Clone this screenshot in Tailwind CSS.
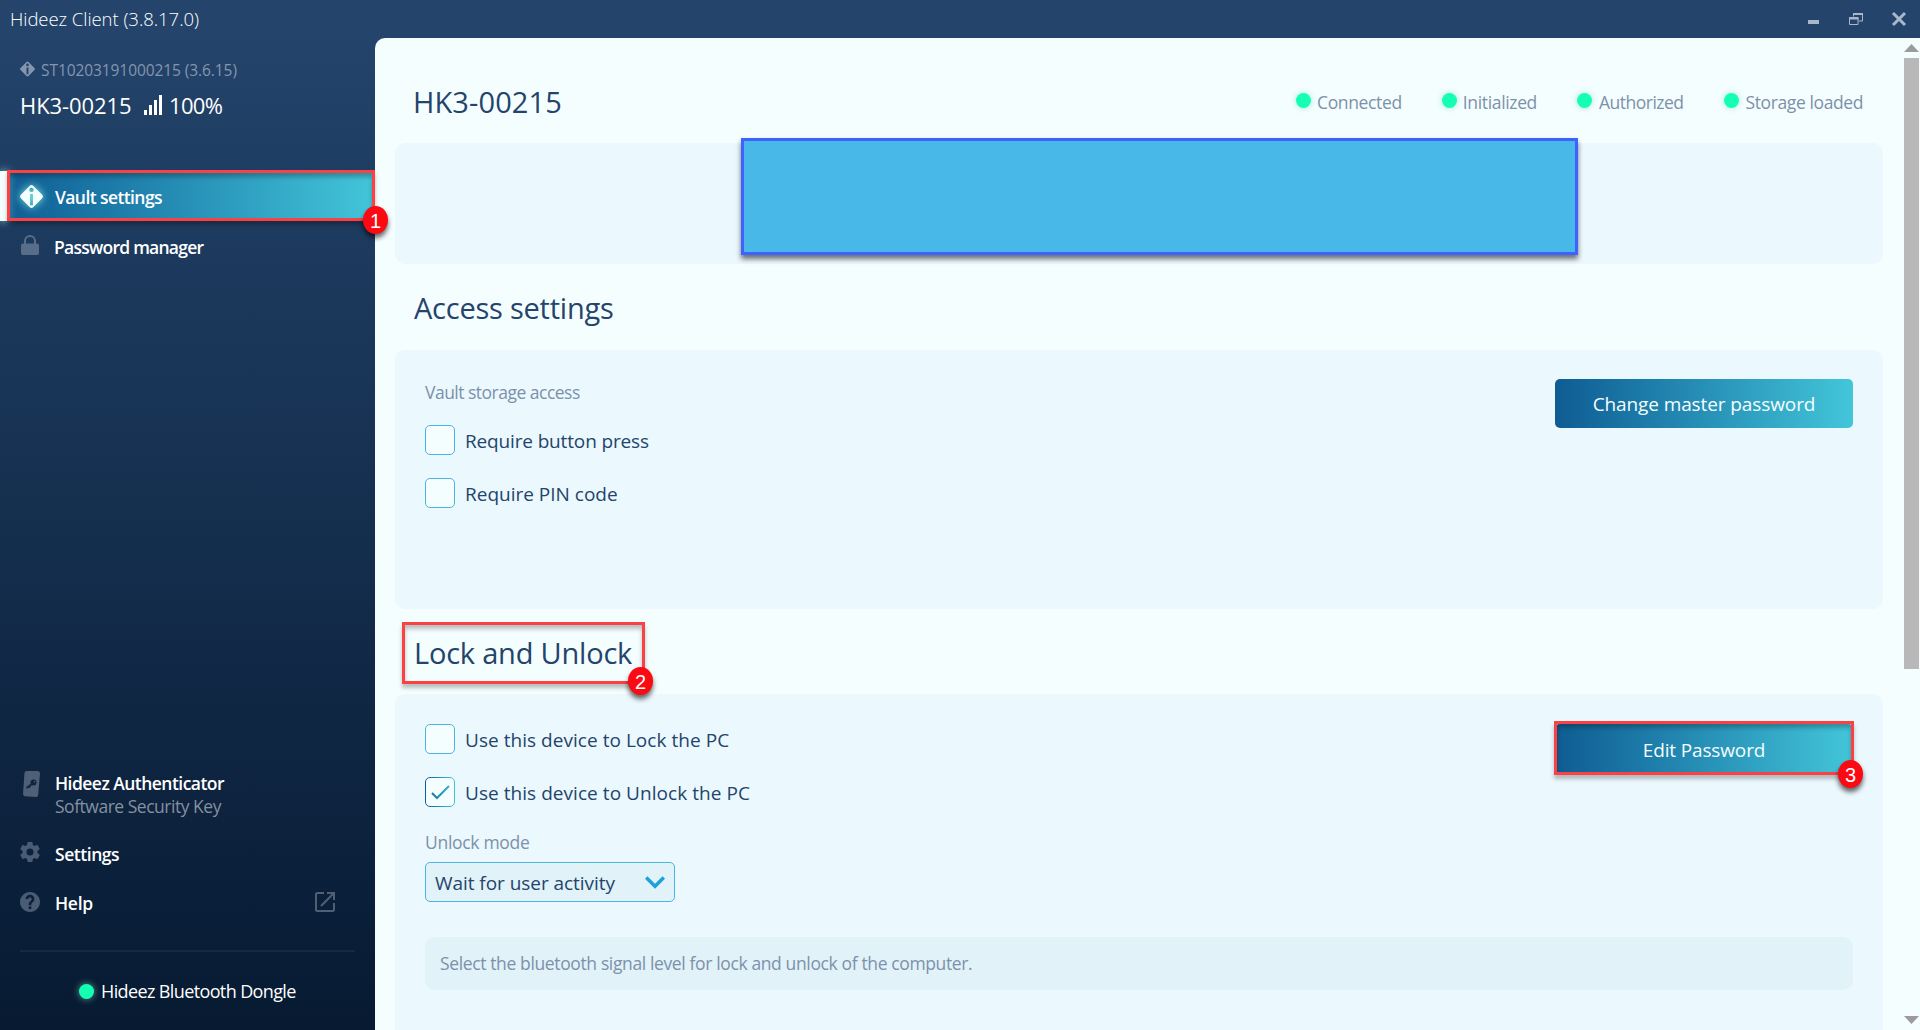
<!DOCTYPE html>
<html lang="en">
<head>
<meta charset="utf-8">
<title>Hideez Client</title>
<script src="https://cdn.jsdelivr.net/npm/@tailwindcss/browser@4"></script>
</head>
<body class="font-['Open_Sans',sans-serif] whitespace-nowrap">
<div class="relative flex h-[1030px] w-[1920px] flex-col overflow-hidden bg-linear-to-b from-[#24456d] to-[#071a32]">

  <!-- Title bar -->
  <header class="flex h-[38px] shrink-0 items-center justify-between bg-[#24446b] pl-[10px] pr-[13px]">
    <h1 class="text-[18.5px] leading-[38px] font-light tracking-[-0.05px] text-white">Hideez Client (3.8.17.0)</h1>
    <div class="flex h-[38px] items-center text-[#a9b7ca]">
      <svg class="mr-[30px] h-[38px] w-[11px]" viewBox="0 0 11 38"><path fill="currentColor" d="M0 20h11v4H0z"/></svg>
      <svg class="mr-[28px] h-[38px] w-[14px]" viewBox="0 0 14 38" fill="none" stroke="currentColor"><path stroke-width="1" d="M4.500 16.500V13.500h9v7.500h-4"/><path stroke-width="2" d="M4 14h10"/><path d="M.5 17.500h8.500v7H.5z"/><path stroke-width="2" d="M0 18.500h9.500"/></svg>
      <svg class="h-[38px] w-[16px]" viewBox="0 0 16 38" fill="none" stroke="currentColor" stroke-width="3"><path d="M2 13l12 12M14 13L2 25"/></svg>
    </div>
  </header>

  <div class="flex min-h-0 flex-1">
    <!-- Sidebar -->
    <aside class="flex w-[375px] shrink-0 flex-col text-white">
      <div class="flex h-[20px] items-center pl-[20px] mt-[22px] text-[#8496ae]">
        <svg class="-mt-[3px] mr-[6px] h-[16px] w-[15px]" viewBox="0 0 24 24" fill="currentColor"><path fill-rule="evenodd" d="M10.300.9a2.500 2.500 0 0 1 3.400 0l9.400 9.400a2.500 2.500 0 0 1 0 3.400l-9.400 9.400a2.500 2.500 0 0 1-3.400 0L.9 13.700a2.500 2.500 0 0 1 0-3.400zM12 3.200a2.200 2.200 0 1 0 0 4.400a2.200 2.200 0 0 0 0-4.400zM10.500 9.500v11h3v-11z"/></svg>
        <span class="text-[15.500px] leading-[20px] tracking-[-0.08px]">ST10203191000215 (3.6.15)</span>
      </div>
      <div class="mt-[11px] flex h-[28px] items-center pl-[20px] text-[22px] leading-[28px]">
        <span class="w-[124px] tracking-[-0.08px]">HK3-00215</span>
        <svg class="mr-[7px] h-[20px] w-[18px]" viewBox="0 0 18 20" fill="currentColor"><path d="M0 15h3v5H0zM5 10h3v10H5zM10 5h3v15h-3zM15 0h3v20h-3z"/></svg>
        <span class="tracking-[-0.700px]">100%</span>
      </div>

      <nav class="mt-[52px] text-[17.500px] font-semibold">
        <div class="relative flex h-[50px] items-center bg-linear-to-r from-[#0f5c93] to-[#43c6da] pl-[20px]">
          <div class="absolute inset-y-0 left-0 w-[8px] bg-[#f5feff] shadow-[0_0_8px_#8fd8d8]"></div>
          <svg class="mr-[12px] h-[23px] w-[23px] drop-shadow-[0_0_4px_#8ff5e8]" viewBox="0 0 24 24" fill="#f4ffff"><path fill-rule="evenodd" d="M10.300.9a2.500 2.500 0 0 1 3.400 0l9.400 9.400a2.500 2.500 0 0 1 0 3.400l-9.400 9.400a2.500 2.500 0 0 1-3.400 0L.9 13.700a2.500 2.500 0 0 1 0-3.400zM12 2.800a2.300 2.300 0 1 0 0 4.600a2.300 2.300 0 0 0 0-4.600zM10.500 9.500v11.500h3V9.500z"/></svg>
          <span class="pt-[2px] tracking-[-0.59px]">Vault settings</span>
        </div>
        <div class="flex h-[50px] items-center pl-[21px]">
          <svg class="-mt-[2px] mr-[15px] h-[20px] w-[18px]" viewBox="0 0 18 20" fill="#586d8a"><path fill-rule="evenodd" d="M3 8.500V6a6 6 0 0 1 12 0v2.500h1a2 2 0 0 1 2 2V18a2 2 0 0 1-2 2H2a2 2 0 0 1-2-2v-7.500a2 2 0 0 1 2-2zM5 8.500h8V6a4 4 0 0 0-8 0z"/></svg>
          <span class="pt-[2px] tracking-[-0.75px]">Password manager</span>
        </div>
      </nav>

      <div class="mt-auto text-[17.500px] font-semibold">
        <div class="flex h-[46px] pl-[23px]">
          <svg class="-mt-[1px] mr-[14px] h-[26px] w-[18px]" viewBox="0 0 18 26"><path fill="#4d6078" d="M3.500 0h11a2.500 2.500 0 0 1 2.500 2.500L15.200 24a2.300 2.300 0 0 1-2.500 2L2 25.200A2.300 2.300 0 0 1 0 23L1.500 2A2 2 0 0 1 3.500 0z"/><circle cx="10.500" cy="11.500" r="3" fill="#10233f"/><path stroke="#10233f" stroke-width="2" d="M9 13l-5.500 4M6 15l1 1.500"/><circle cx="11.500" cy="10.800" r=".8" fill="#4d6078"/></svg>
          <div class="leading-[23px]">
            <div class="tracking-[-0.54px]">Hideez Authenticator</div>
            <div class="font-normal tracking-[-0.48px] text-[#8590a0]">Software Security Key</div>
          </div>
        </div>
        <div class="mt-[10px] flex h-[50px] items-center pl-[20px]">
          <svg class="-mt-[3px] mr-[14px] h-[20px] w-[20px]" viewBox="2 2 20 20" fill="#4a5c73"><path d="M19.430 12.980c.04-.32.070-.64.070-.98s-.03-.66-.07-.98l2.110-1.650c.19-.15.240-.42.120-.64l-2-3.460c-.12-.22-.39-.3-.61-.22l-2.490 1c-.52-.4-1.080-.73-1.690-.98l-.38-2.650C14.460 2.180 14.250 2 14 2h-4c-.25 0-.46.180-.49.420l-.38 2.650c-.61.250-1.170.590-1.690.980l-2.490-1c-.23-.09-.49 0-.61.220l-2 3.460c-.13.220-.07.490.120.640l2.110 1.650c-.04.320-.07.650-.07.980s.03.660.070.980l-2.110 1.650c-.19.150-.24.420-.12.640l2 3.460c.12.220.390.300.610.220l2.490-1c.52.400 1.080.730 1.690.980l.38 2.650c.03.240.240.420.490.420h4c.25 0 .46-.18.490-.42l.38-2.650c.61-.25 1.170-.59 1.690-.98l2.490 1c.23.090.490 0 .61-.22l2-3.460c.12-.22.070-.49-.12-.64l-2.110-1.650zM12 15.500a3.500 3.500 0 1 1 0-7a3.500 3.500 0 0 1 0 7z"/></svg>
          <span class="pt-[2px] pl-px tracking-[-0.46px]">Settings</span>
        </div>
        <div class="flex h-[50px] items-center pl-[20px] pr-[40px]">
          <svg class="-mt-[3px] mr-[14px] h-[20px] w-[20px]" viewBox="2 2 20 20" fill="#4a5c73"><path d="M12 2C6.480 2 2 6.480 2 12s4.480 10 10 10 10-4.480 10-10S17.520 2 12 2zm1.300 17h-2.600v-2.400h2.600V19zm2.200-7.600l-.9.950c-.9.900-1.300 1.400-1.300 2.850h-2.600v-.6c0-1.100.4-2.100 1.200-2.850l1.240-1.260a1.900 1.900 0 0 0 .6-1.400 1.750 1.750 0 0 0-3.500 0H7.600a4.400 4.400 0 0 1 8.800 0c0 .9-.36 1.700-.9 2.310z"/></svg>
          <span class="pt-[1px] pl-px tracking-[-0.3px]">Help</span>
          <svg class="-mt-[3px] ml-auto h-[20px] w-[20px]" viewBox="0 0 20 20" fill="none" stroke="#4f6075" stroke-width="2"><path d="M9 1H2.500A1.500 1.500 0 0 0 1 2.500v15A1.500 1.500 0 0 0 2.500 19h15a1.500 1.500 0 0 0 1.500-1.500V11M12 1h7v7M19 1L6 14"/></svg>
        </div>
      </div>
      <div class="mx-[20px] mt-[22px] h-[2px] shrink-0 bg-[#172a44]"></div>
      <div class="mt-[19px] mb-[19px] flex h-[40px] shrink-0 items-center pl-[79px]">
        <i class="mr-[7px] h-[15px] w-[15px] rounded-full bg-[#14ffb4] shadow-[0_0_7px_#5aa594]"></i>
        <span class="text-[18px] tracking-[-0.62px]">Hideez Bluetooth Dongle</span>
      </div>
    </aside>

    <!-- Content -->
    <main class="flex min-w-0 flex-1 overflow-hidden rounded-tl-[10px] bg-[#f5feff] text-[#24446b]">
      <div class="flex w-[1528px] shrink-0 flex-col px-[20px]">
        <div class="flex h-[105px] shrink-0 items-center justify-between pt-[23px] pl-[18px] pr-[20px]">
          <h2 class="text-[29px] leading-[40px] tracking-[0.1px]">HK3-00215</h2>
          <div class="flex gap-[40px] text-[17.500px] leading-[24px] text-[#7c91aa]">
            <div class="flex items-center gap-[6px]"><i class="-mt-[3px] h-[15px] w-[15px] rounded-full bg-[#14ffb4] shadow-[0_0_7px_#a5e8d8]"></i><span class="tracking-[-0.35px]">Connected</span></div>
            <div class="flex items-center gap-[6px]"><i class="-mt-[3px] h-[15px] w-[15px] rounded-full bg-[#14ffb4] shadow-[0_0_7px_#a5e8d8]"></i><span class="tracking-[-0.35px]">Initialized</span></div>
            <div class="flex items-center gap-[7px]"><i class="-mt-[3px] h-[15px] w-[15px] rounded-full bg-[#14ffb4] shadow-[0_0_7px_#a5e8d8]"></i><span class="tracking-[-0.5px]">Authorized</span></div>
            <div class="flex items-center gap-[7px]"><i class="-mt-[3px] h-[15px] w-[15px] rounded-full bg-[#14ffb4] shadow-[0_0_7px_#a5e8d8]"></i><span class="tracking-[-0.4px]">Storage loaded</span></div>
          </div>
        </div>

        <section class="h-[121px] shrink-0 rounded-[10px] bg-[#ebf8fe]"></section>

        <div class="flex h-[86px] shrink-0 items-center pt-[2px] pl-[19px]">
          <h2 class="text-[29px] leading-[40px] tracking-[-0.23px]">Access settings</h2>
        </div>

        <section class="flex h-[259px] shrink-0 items-start justify-between rounded-[10px] bg-[#ebf8fe] px-[30px] pt-[29px]">
          <div class="flex flex-col">
            <span class="pt-px text-[17.500px] leading-[24px] tracking-[-0.51px] text-[#7c91aa]">Vault storage access</span>
            <label class="mt-[21px] flex h-[30px] items-center gap-[10px] text-[19px]"><i class="h-[30px] w-[30px] rounded-[5px] border border-[#48b5e2] bg-[#f5feff]"></i><span class="pt-[2px] tracking-[-0.15px]">Require button press</span></label>
            <label class="mt-[23px] flex h-[30px] items-center gap-[10px] text-[19px]"><i class="h-[30px] w-[30px] rounded-[5px] border border-[#48b5e2] bg-[#f5feff]"></i><span class="pt-[2px]">Require PIN code</span></label>
          </div>
          <button class="h-[49px] w-[298px] rounded-[5px] bg-linear-to-r from-[#0f5c93] to-[#43c6da] pt-[2px] text-[19px] tracking-[-0.1px] text-[#f5feff]">Change master password</button>
        </section>

        <div class="flex h-[85px] shrink-0 items-center pt-[3px] pl-[19px]">
          <h2 class="text-[29px] leading-[40px] tracking-[-0.21px]">Lock and Unlock</h2>
        </div>

        <section class="flex h-[360px] shrink-0 flex-col rounded-t-[10px] bg-[#ebf8fe] px-[30px] pt-[30px]">
          <div class="flex items-start justify-between">
            <div class="flex flex-col">
              <label class="flex h-[30px] items-center gap-[10px] text-[19px]"><i class="h-[30px] w-[30px] rounded-[5px] border border-[#48b5e2] bg-[#f5feff]"></i><span class="pt-[2px] tracking-[0.04px]">Use this device to Lock the PC</span></label>
              <label class="mt-[23px] flex h-[30px] items-center gap-[10px] text-[19px]">
                <svg class="h-[30px] w-[30px]" viewBox="0 0 30 30"><defs><linearGradient id="chk" gradientUnits="userSpaceOnUse" x1="0" y1="0" x2="30" y2="0"><stop stop-color="#0f5c93"/><stop offset="1" stop-color="#43c6da"/></linearGradient></defs><rect x=".5" y=".5" width="29" height="29" rx="4.500" fill="#f5feff" stroke="url(#chk)"/><path d="M7 16l5 5L24 9" fill="none" stroke="url(#chk)" stroke-width="2"/></svg>
                <span class="pt-[2px] tracking-[0.05px]">Use this device to Unlock the PC</span>
              </label>
              <span class="mt-[22px] pt-px text-[17.500px] leading-[24px] tracking-[-0.3px] text-[#7c91aa]">Unlock mode</span>
              <div class="mt-[8px] flex h-[40px] w-[250px] items-center justify-between rounded-[5px] border border-[#48b5e2] bg-[#e1f2f9] pr-[9px] pl-[9px] text-[19px]">
                <span class="pt-[2px] tracking-[-0.05px]">Wait for user activity</span>
                <svg class="h-[13px] w-[20px]" viewBox="0 0 20 13" fill="none" stroke="#1ea1dc" stroke-width="3.500"><path d="M1.200 1.500L10 10.200L18.800 1.500"/></svg>
              </div>
            </div>
            <button class="h-[50px] w-[298px] rounded-[5px] bg-linear-to-r from-[#0f5c93] to-[#43c6da] pt-[2px] text-[19px] tracking-[-0.14px] text-[#f5feff]">Edit Password</button>
          </div>
          <div class="mt-[35px] flex h-[53px] shrink-0 items-center rounded-[10px] bg-[#e1f2f9] pl-[15px] text-[17.500px] tracking-[-0.37px] text-[#7c91aa]">Select the bluetooth signal level for lock and unlock of the computer.</div>
        </section>
      </div>

      <!-- Scrollbar -->
      <div class="flex w-[17px] flex-col items-start pl-[1px] pt-[6px]">
        <svg class="h-[8px] w-[15px]" viewBox="0 0 15 8"><path fill="#9b9b9b" d="M0 8L7.500 0L15 8z"/></svg>
        <div class="mt-[6px] h-[611px] w-[15px] bg-[#b8b8b8]"></div>
        <svg class="mt-auto mb-[6px] h-[8px] w-[15px]" viewBox="0 0 15 8"><path fill="#9b9b9b" d="M0 0L7.500 8L15 0z"/></svg>
      </div>
    </main>
  </div>

  <!-- Annotations -->
  <div class="absolute top-[138px] left-[741px] h-[117px] w-[837px] border-[3px] border-[#4060ff] bg-[#47b8e8] shadow-[0_4px_5px_rgba(0,0,0,0.55)]"></div>
  <div class="absolute top-[170px] left-[7px] h-[51px] w-[368px] border-[3px] border-[#fc4144] shadow-[0_4px_4px_rgba(0,0,0,0.25),inset_0_4px_4px_rgba(0,0,0,0.25)]"></div>
  <div class="absolute top-[622px] left-[402px] h-[62px] w-[243px] border-[3px] border-[#fc4144] shadow-[0_4px_4px_rgba(0,0,0,0.25),inset_0_4px_4px_rgba(0,0,0,0.25)]"></div>
  <div class="absolute top-[721px] left-[1554px] h-[54px] w-[300px] border-[3px] border-[#fc4144] shadow-[0_4px_4px_rgba(0,0,0,0.25),inset_0_4px_4px_rgba(0,0,0,0.25)]"></div>
  <div class="absolute top-[206px] left-[363px] flex h-[28px] w-[25px] items-center justify-center rounded-[50%] bg-[#fb0a14] pt-px font-['Liberation_Sans',sans-serif] text-[20px] text-white shadow-[0_4px_5px_rgba(0,0,0,0.6)]">1</div>
  <div class="absolute top-[667px] left-[628px] flex h-[28px] w-[25px] items-center justify-center rounded-[50%] bg-[#fb0a14] pt-px font-['Liberation_Sans',sans-serif] text-[20px] text-white shadow-[0_4px_5px_rgba(0,0,0,0.6)]">2</div>
  <div class="absolute top-[760px] left-[1838px] flex h-[28px] w-[25px] items-center justify-center rounded-[50%] bg-[#fb0a14] pt-px font-['Liberation_Sans',sans-serif] text-[20px] text-white shadow-[0_4px_5px_rgba(0,0,0,0.6)]">3</div>
</div>
</body>
</html>
